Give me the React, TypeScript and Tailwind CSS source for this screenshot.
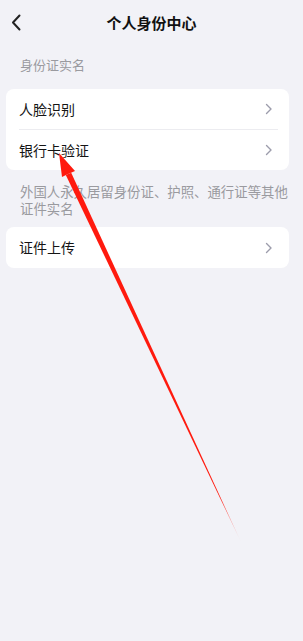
import React from "react";

const Chevron = () => (
  <svg width="8" height="12" viewBox="0 0 8 12" fill="none">
    <path d="M1.5 1.5 L6 6 L1.5 10.5" stroke="#9c9cab" strokeWidth="1.4" strokeLinecap="round" strokeLinejoin="round" />
  </svg>
);

export default function App() {
  const font = { fontFamily: '"Noto Sans CJK SC", "Noto Sans", sans-serif' };
  return (
    <div className="relative w-[303px] h-[641px] bg-[#f2f2f7] overflow-hidden" style={font}>
      <div className="relative h-[44px] flex items-center justify-center">
        <svg className="absolute left-[11px] top-[14px]" width="11" height="17" viewBox="0 0 11 17" fill="none">
          <path d="M8.5 1.5 L2 8.5 L8.5 15.5" stroke="#222" strokeWidth="2" strokeLinecap="round" strokeLinejoin="round" />
        </svg>
        <span className="text-[15px] font-semibold text-[#111] leading-none">个人身份中心</span>
      </div>
      <div className="pl-[20px] pt-[12px] pb-[15px] text-[13px] leading-[18px] text-[#9a9a9f]">身份证实名</div>
      <div className="ml-[6px] mr-[14px] bg-white rounded-[8px]">
        <div className="h-[40px] flex items-center justify-between pl-[13px] pr-[16px]">
          <span className="text-[14px] text-[#141414]">人脸识别</span>
          <Chevron />
        </div>
        <div className="ml-[13px] mr-[11px] h-px bg-[#ececf0]" />
        <div className="h-[40px] flex items-center justify-between pl-[13px] pr-[16px]">
          <span className="text-[14px] text-[#141414]">银行卡验证</span>
          <Chevron />
        </div>
      </div>
      <div className="pl-[20px] pt-[13px] pb-[10px] w-[296px] text-[13.4px] leading-[17px] text-[#9a9a9f]">
        外国人永久居留身份证、护照、通行证等其他证件实名
      </div>
      <div className="ml-[6px] mr-[14px] bg-white rounded-[8px]">
        <div className="h-[41px] flex items-center justify-between pl-[13px] pr-[16px]">
          <span className="text-[14px] text-[#141414]">证件上传</span>
          <Chevron />
        </div>
      </div>
      <svg className="absolute left-0 top-0 pointer-events-none" width="303" height="641" viewBox="0 0 303 641">
        <defs>
          <linearGradient id="fade" x1="68" y1="174" x2="241" y2="542" gradientUnits="userSpaceOnUse">
            <stop offset="0" stopColor="#ff1a0e" stopOpacity="1" />
            <stop offset="0.88" stopColor="#ff1a0e" stopOpacity="1" />
            <stop offset="1" stopColor="#ff1a0e" stopOpacity="0.05" />
          </linearGradient>
        </defs>
        <polygon points="59,153 75,171 71,172.8 66,174.9 62,177" fill="#ff1a0e" />
        <polygon points="71.2,172.8 241,542 65.8,174.9" fill="url(#fade)" />
      </svg>
    </div>
  );
}
